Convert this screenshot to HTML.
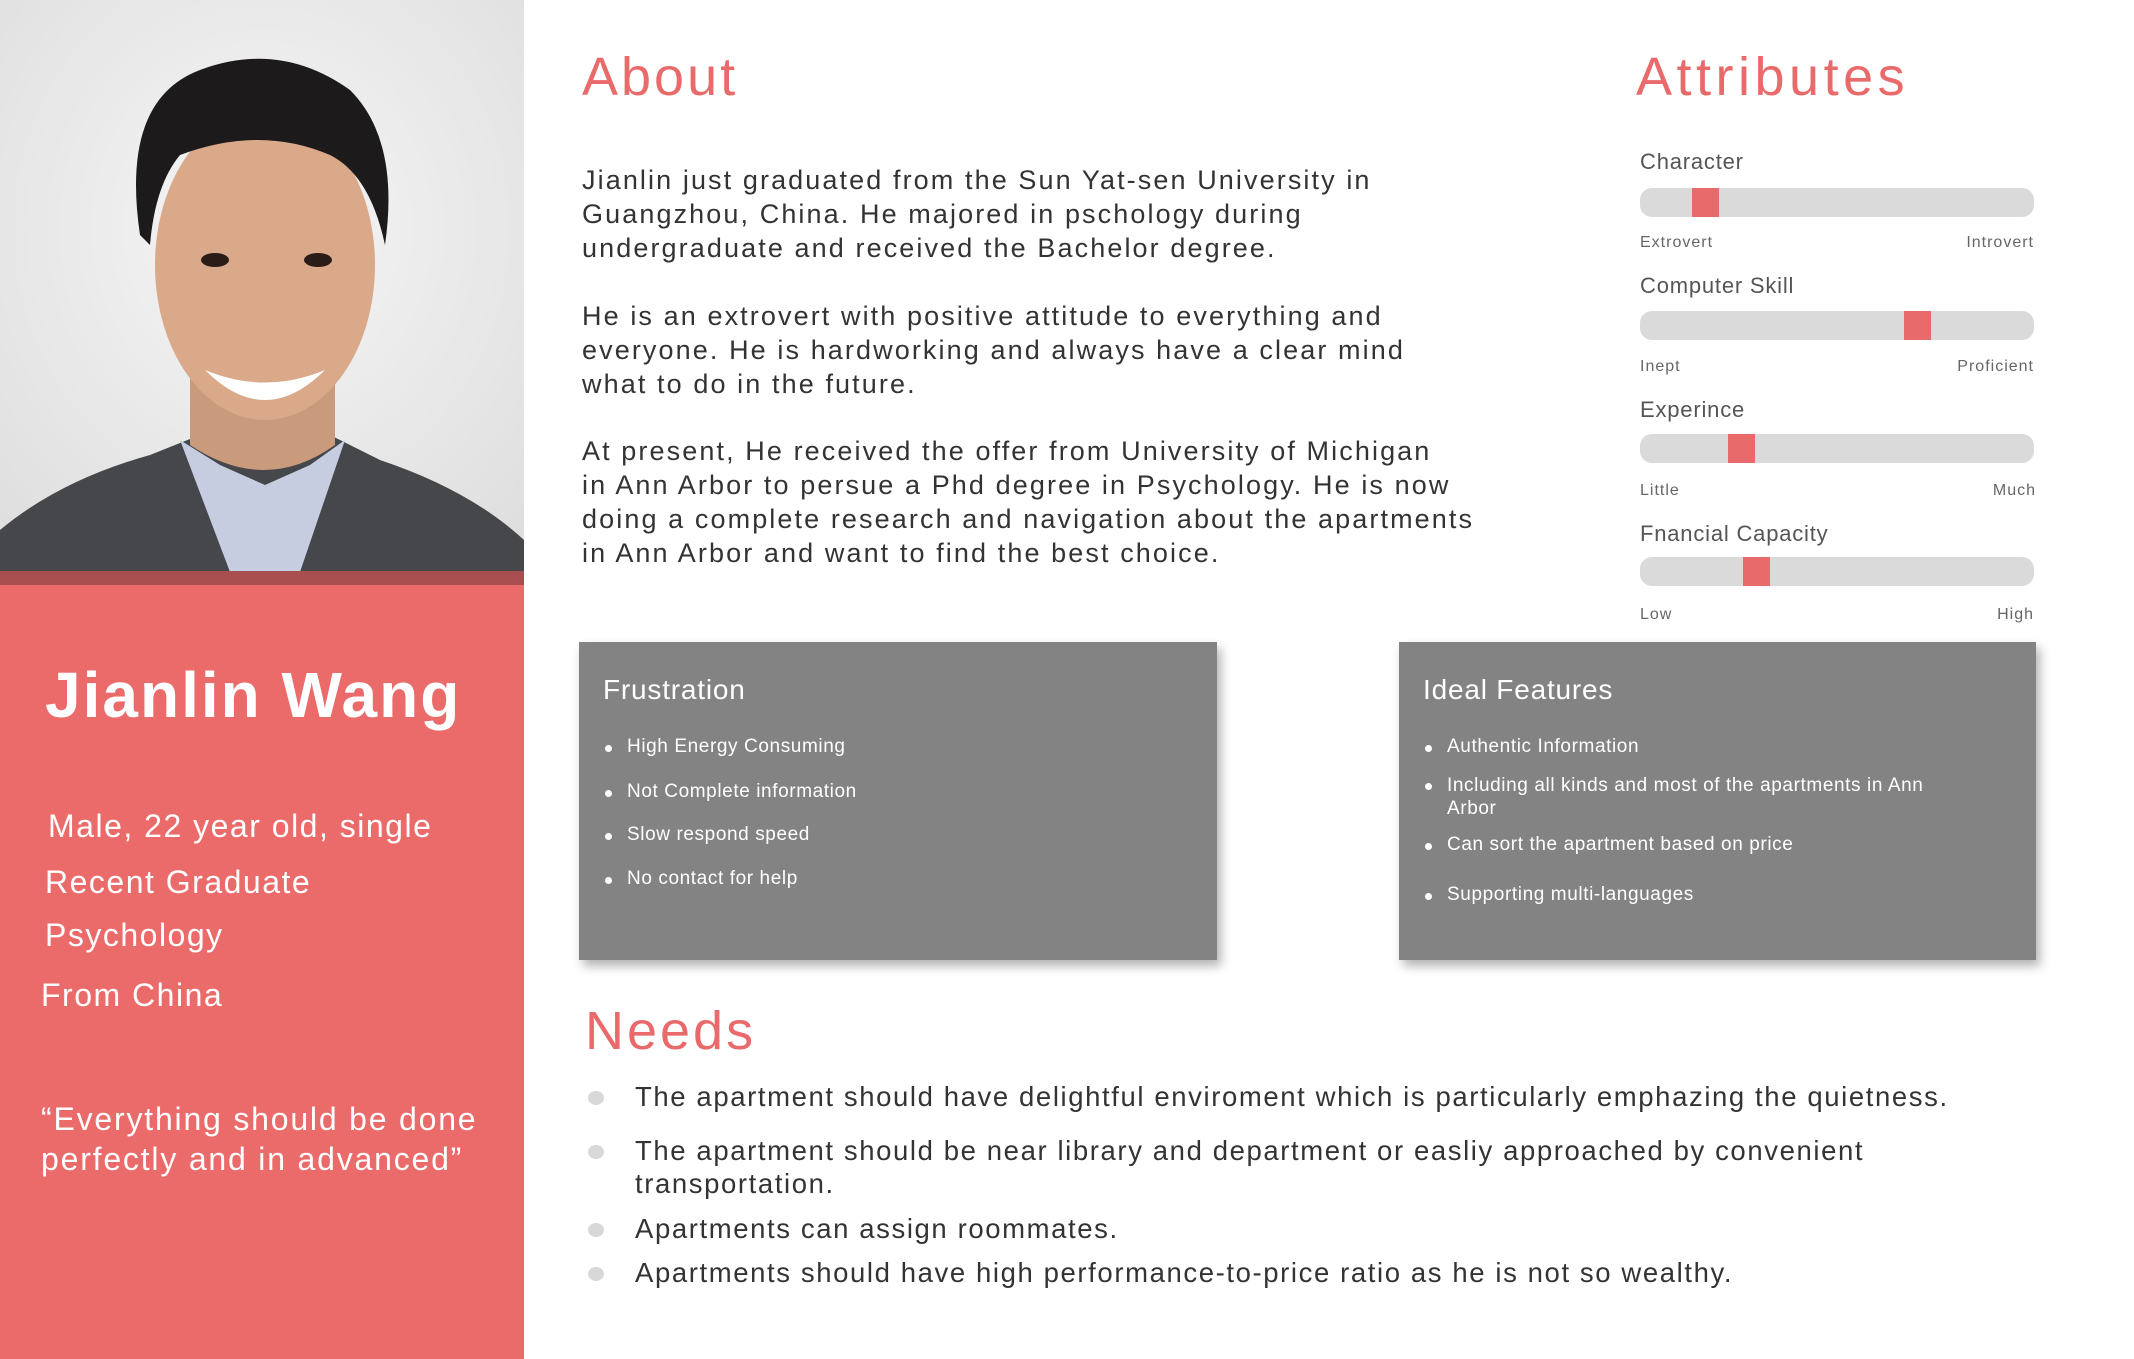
<!DOCTYPE html>
<html><head><meta charset="utf-8"><style>
*{margin:0;padding:0;box-sizing:border-box}
body{width:2134px;height:1359px;background:#fff;position:relative;overflow:hidden;font-family:"Liberation Sans",sans-serif;color:#333}
.a{position:absolute;white-space:nowrap}
.red{color:#e96a6a}
.h{font-size:54px;letter-spacing:3px;font-weight:normal}
.p{font-size:27px;line-height:34px;letter-spacing:2.1px;color:#333}
.bar{position:absolute;left:1640px;width:394px;height:29px;background:#dadada;border-radius:12px}
.mk{position:absolute;top:0;width:27px;height:29px;background:#e96a6a}
.lbl{font-size:22px;color:#555;letter-spacing:.8px}
.sm{font-size:16px;color:#666;letter-spacing:1px}
.r{right:100px;text-align:right}
.box{position:absolute;background:#838383;box-shadow:4px 6px 10px rgba(0,0,0,.3);color:#fff}
.box .t{position:absolute;left:24px;top:32px;font-size:28px;letter-spacing:.8px}
.box ul{position:absolute;left:24px;list-style:none;font-size:19px;letter-spacing:.6px}
.box li{position:absolute;left:0;white-space:nowrap;padding-left:24px}
.box li:before{content:"";position:absolute;left:2px;top:9px;width:7px;height:7px;border-radius:50%;background:#fff}
.nd{position:absolute;left:635px;font-size:27.5px;letter-spacing:1.6px;color:#333;line-height:33px;white-space:nowrap}
.nd:before{content:"";position:absolute;left:-47px;top:11px;width:16px;height:14px;border-radius:50%;background:#d8d8d8}
.w{color:#fff}
</style></head><body>
<svg class="a" style="left:0;top:0" width="524" height="572" viewBox="0 0 524 572">
<defs><radialGradient id="bg" cx="0.5" cy="0.4" r="0.8"><stop offset="0" stop-color="#f6f6f6"/><stop offset="1" stop-color="#dcdcdc"/></radialGradient></defs>
<rect width="524" height="572" fill="url(#bg)"/>
<path d="M0 572 L0 530 Q60 480 150 455 L200 435 L330 435 L380 460 Q470 490 524 540 L524 572Z" fill="#45474b"/>
<path d="M180 440 L230 572 L300 572 L345 440 L310 465 L265 485 L220 465Z" fill="#c6cde0"/>
<path d="M190 360 L190 445 Q265 495 335 445 L335 360Z" fill="#c99a7c"/>
<ellipse cx="265" cy="265" rx="110" ry="155" fill="#d9a98a"/>
<path d="M140 235 Q120 100 200 70 Q280 40 350 90 Q400 140 385 245 Q370 175 330 155 Q260 125 180 155 Q155 185 150 245Z" fill="#1c1a1a"/>
<path d="M205 370 Q265 430 325 370 Q265 395 205 370Z" fill="#fff"/>
<ellipse cx="215" cy="260" rx="14" ry="7" fill="#2a1c16"/><ellipse cx="318" cy="260" rx="14" ry="7" fill="#2a1c16"/>
</svg>
<div class="a" style="left:0;top:571px;width:524px;height:14px;background:#a84e4e"></div>
<div class="a" style="left:0;top:585px;width:524px;height:774px;background:#eb6b6b"></div>
<div class="a w" style="left:45px;top:658px;font-size:64px;font-weight:bold;letter-spacing:2px">Jianlin Wang</div>
<div class="a w" style="left:48px;top:808px;font-size:32px;letter-spacing:1.5px">Male, 22 year old, single</div>
<div class="a w" style="left:45px;top:864px;font-size:32px;letter-spacing:1.5px">Recent Graduate</div>
<div class="a w" style="left:45px;top:917px;font-size:32px;letter-spacing:1.5px">Psychology</div>
<div class="a w" style="left:41px;top:977px;font-size:32px;letter-spacing:1.5px">From China</div>
<div class="a w" style="left:41px;top:1099px;font-size:32px;letter-spacing:1.8px;line-height:40px">“Everything should be done<br>perfectly and in advanced”</div>

<div class="a h red" style="left:582px;top:46px">About</div>
<div class="a p" style="left:582px;top:163px">Jianlin just graduated from the Sun Yat-sen University in<br>Guangzhou, China. He majored in pschology during<br>undergraduate and received the Bachelor degree.</div>
<div class="a p" style="left:582px;top:299px">He is an extrovert with positive attitude to everything and<br>everyone. He is hardworking and always have a clear mind<br>what to do in the future.</div>
<div class="a p" style="left:582px;top:434px">At present, He received the offer from University of Michigan<br>in Ann Arbor to persue a Phd degree in Psychology. He is now<br>doing a complete research and navigation about the apartments<br>in Ann Arbor and want to find the best choice.</div>

<div class="a h red" style="left:1636px;top:46px;letter-spacing:4.5px">Attributes</div>
<div class="a lbl" style="left:1640px;top:149px">Character</div>
<div class="bar" style="top:188px"><div class="mk" style="left:52px"></div></div>
<div class="a sm" style="left:1640px;top:234px">Extrovert</div><div class="a sm r" style="top:234px">Introvert</div>
<div class="a lbl" style="left:1640px;top:273px">Computer Skill</div>
<div class="bar" style="top:311px"><div class="mk" style="left:264px"></div></div>
<div class="a sm" style="left:1640px;top:358px">Inept</div><div class="a sm r" style="top:358px">Proficient</div>
<div class="a lbl" style="left:1640px;top:397px">Experince</div>
<div class="bar" style="top:434px"><div class="mk" style="left:88px"></div></div>
<div class="a sm" style="left:1640px;top:482px">Little</div><div class="a sm r" style="top:482px;right:98px">Much</div>
<div class="a lbl" style="left:1640px;top:521px">Fnancial Capacity</div>
<div class="bar" style="top:557px"><div class="mk" style="left:103px"></div></div>
<div class="a sm" style="left:1640px;top:606px">Low</div><div class="a sm r" style="top:606px">High</div>

<div class="box" style="left:579px;top:642px;width:638px;height:318px">
<div class="t" style="white-space:nowrap">Frustration</div>
<ul><li style="top:94px">High Energy Consuming</li><li style="top:139px">Not Complete information</li><li style="top:182px">Slow respond speed</li><li style="top:226px">No contact for help</li></ul>
</div>
<div class="box" style="left:1399px;top:642px;width:637px;height:318px">
<div class="t" style="white-space:nowrap">Ideal Features</div>
<ul><li style="top:94px">Authentic Information</li><li style="top:132px;line-height:23px">Including all kinds and most of the apartments in Ann<br>Arbor</li><li style="top:192px">Can sort the apartment based on price</li><li style="top:242px">Supporting multi-languages</li></ul>
</div>

<div class="a h red" style="left:585px;top:1000px">Needs</div>
<div class="nd" style="top:1080px">The apartment should have delightful enviroment which is particularly emphazing the quietness.</div>
<div class="nd" style="top:1134px">The apartment should be near library and department or easliy approached by convenient<br>transportation.</div>
<div class="nd" style="top:1212px">Apartments can assign roommates.</div>
<div class="nd" style="top:1256px">Apartments should have high performance-to-price ratio as he is not so wealthy.</div>
</body></html>
